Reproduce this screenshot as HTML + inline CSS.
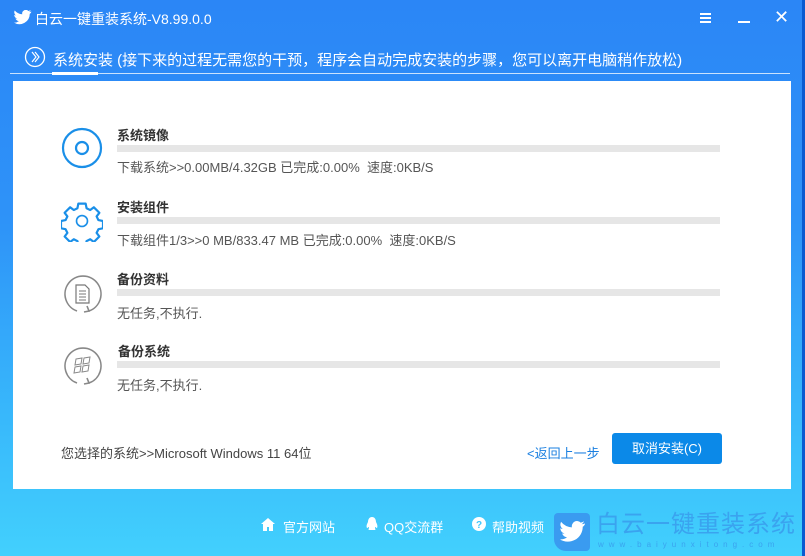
<!DOCTYPE html>
<html><head><meta charset="utf-8"><style>
*{margin:0;padding:0;box-sizing:border-box}
html,body{width:805px;height:556px;overflow:hidden}
body{font-family:"Liberation Sans","Noto Sans CJK SC",sans-serif;position:relative;
background:linear-gradient(180deg,#2b86f6 0%,#2e93f8 40%,#38b8fb 75%,#42d0fd 100%);}
.abs{position:absolute;white-space:nowrap}
.title{left:35px;top:9px;color:#fff;font-size:14px}
.hdr{left:53px;top:49px;color:#fff;font-size:15px}
.line{left:10px;top:73px;width:780px;height:1px;background:rgba(255,255,255,.75)}
.tab{left:52px;top:72px;width:46px;height:3px;background:#fff}
.panel{left:13px;top:81px;width:778px;height:408px;background:#fff}
.name{font-size:13px;font-weight:bold;color:#333}
.bar{width:603px;height:7px;background:#e6e6e6}
.st{font-size:13px;color:#555}
.btn{left:612px;top:433px;width:110px;height:31px;background:#0b89e8;border-radius:3px;color:#fff;font-size:13px;text-align:center;line-height:31px}
.ft{color:#fff;font-size:13px;top:517px}
.rb{right:0;top:0;width:3px;height:556px;background:#0a5ad0}
</style></head><body>
<div class="abs rb"></div>
<svg class="abs" style="left:14px;top:10px" width="18" height="15" viewBox="0 0 24 20"><path fill="#fff" d="M23 2c-1 .5-2 .7-3 .8 1-.6 1.8-1.6 2.2-2.7-1 .6-2 1-3.1 1.2A4.8 4.8 0 0 0 11 5.7 13.7 13.7 0 0 1 1 .7a4.8 4.8 0 0 0 1.5 6.4c-.8 0-1.5-.2-2.2-.6 0 2.3 1.7 4.3 3.9 4.8-.7.2-1.5.2-2.2.1.6 1.9 2.4 3.3 4.5 3.4A9.7 9.7 0 0 1 0 16.8 13.7 13.7 0 0 0 21 5.2c1-.7 1.7-1.6 2-2.5z"/></svg>
<div class="abs title">白云一键重装系统-V8.99.0.0</div>
<div class="abs" style="left:700px;top:13px;width:11px;height:2px;background:#fff;box-shadow:0 4px #fff,0 8px #fff"></div>
<div class="abs" style="left:738px;top:21px;width:12px;height:2px;background:#fff"></div>
<div class="abs" style="left:774px;top:8px;color:#fff;font-size:18px;line-height:18px">✕</div>
<svg class="abs" style="left:24px;top:46px" width="22" height="22"><circle cx="11" cy="11" r="9.5" fill="none" stroke="#fff" stroke-width="1.3"/><path d="M8 6l4 5-4 5M11 6l4 5-4 5" fill="none" stroke="#fff" stroke-width="1.2"/></svg>
<div class="abs hdr">系统安装 (接下来的过程无需您的干预，程序会自动完成安装的步骤，您可以离开电脑稍作放松)</div>
<div class="abs line"></div><div class="abs tab"></div>
<div class="abs panel"></div>

<svg class="abs" style="left:61px;top:127px" width="42" height="42"><circle cx="21" cy="21" r="19" fill="none" stroke="#1a8fe8" stroke-width="2.2"/><circle cx="21" cy="21" r="6" fill="none" stroke="#1a8fe8" stroke-width="2.2"/></svg>
<div class="abs name" style="left:117px;top:125px">系统镜像</div>
<div class="abs bar" style="left:117px;top:145px"></div>
<div class="abs st" style="left:117px;top:157px">下载系统>>0.00MB/4.32GB 已完成:0.00%&nbsp; 速度:0KB/S</div>

<svg class="abs" style="left:61px;top:200px" width="42" height="42" viewBox="-2 -2 46 46"><path fill="none" stroke="#1a8fe8" stroke-width="2.4" stroke-linejoin="round" d="M17 2h8l1 5 4 2 4-3 6 6-3 4 2 4 5 1v8l-5 1-2 4 3 4-6 6-4-3-4 2-1 5h-8l-1-5-4-2-4 3-6-6 3-4-2-4-5-1v-8l5-1 2-4-3-4 6-6 4 3 4-2z"/><circle cx="21" cy="21" r="6" fill="none" stroke="#1a8fe8" stroke-width="1.8"/></svg>
<div class="abs name" style="left:117px;top:197px">安装组件</div>
<div class="abs bar" style="left:117px;top:217px"></div>
<div class="abs st" style="left:117px;top:230px">下载组件1/3>>0 MB/833.47 MB 已完成:0.00%&nbsp; 速度:0KB/S</div>

<svg class="abs" style="left:61px;top:273px" width="42" height="42"><path d="M16 38A18 18 0 1 1 28 38" fill="none" stroke="#888" stroke-width="1.6"/><path d="M26 33l2 5-5 1" fill="none" stroke="#888" stroke-width="1.6"/><path d="M15 12h9l4 4v14H15z" fill="none" stroke="#777" stroke-width="1.2"/><path d="M18 18h7M18 21h7M18 24h7M18 27h7" stroke="#777"/></svg>
<div class="abs name" style="left:117px;top:269px">备份资料</div>
<div class="abs bar" style="left:117px;top:289px"></div>
<div class="abs st" style="left:117px;top:303px">无任务,不执行.</div>

<svg class="abs" style="left:61px;top:345px" width="42" height="42"><path d="M16 38A18 18 0 1 1 28 38" fill="none" stroke="#888" stroke-width="1.6"/><path d="M26 33l2 5-5 1" fill="none" stroke="#888" stroke-width="1.6"/><path d="M15 14l6-1 -1 6-6 1zM23 13l6-1-1 6-6 1zM14 22l6-1-1 6-6 1zM22 21l6-1-1 6-6 1z" fill="none" stroke="#888" stroke-width="1"/></svg>
<div class="abs name" style="left:118px;top:341px">备份系统</div>
<div class="abs bar" style="left:117px;top:361px"></div>
<div class="abs st" style="left:117px;top:375px">无任务,不执行.</div>

<div class="abs st" style="left:61px;top:443px;color:#444">您选择的系统>>Microsoft Windows 11 64位</div>
<div class="abs" style="left:527px;top:443px;color:#1a7fe0;font-size:13px">&lt;返回上一步</div>
<div class="abs btn">取消安装(C)</div>

<svg class="abs" style="left:261px;top:518px" width="14" height="13"><path d="M7 0L0 6h2v7h4V9h2v4h4V6h2z" fill="#fff"/></svg>
<div class="abs ft" style="left:283px">官方网站</div>
<svg class="abs" style="left:365px;top:517px" width="14" height="15"><path d="M7 0C4 0 3 3 3 5 2 7 1 9 2 11c1 0 1-1 2-1 0 2-1 3 0 3h6c1 0 0-1 0-3 1 0 1 1 2 1 1-2 0-4-1-6 0-2-1-5-4-5z" fill="#fff"/></svg>
<div class="abs ft" style="left:384px">QQ交流群</div>
<svg class="abs" style="left:472px;top:517px" width="14" height="14"><circle cx="7" cy="7" r="7" fill="#fff"/><text x="7" y="11" text-anchor="middle" font-size="10" font-weight="bold" fill="#3fc6fb" font-family="Liberation Sans">?</text></svg>
<div class="abs ft" style="left:492px">帮助视频</div>
<div class="abs" style="left:554px;top:513px;width:36px;height:38px;background:#3a9bf0;border-radius:4px 4px 4px 12px"></div>
<svg class="abs" style="left:560px;top:521px" width="26" height="22" viewBox="0 0 24 20"><path fill="#fff" d="M23 2c-1 .5-2 .7-3 .8 1-.6 1.8-1.6 2.2-2.7-1 .6-2 1-3.1 1.2A4.8 4.8 0 0 0 11 5.7 13.7 13.7 0 0 1 1 .7a4.8 4.8 0 0 0 1.5 6.4c-.8 0-1.5-.2-2.2-.6 0 2.3 1.7 4.3 3.9 4.8-.7.2-1.5.2-2.2.1.6 1.9 2.4 3.3 4.5 3.4A9.7 9.7 0 0 1 0 16.8 13.7 13.7 0 0 0 21 5.2c1-.7 1.7-1.6 2-2.5z"/></svg>
<div class="abs" style="left:596px;top:512px;color:#3aa3ef;font-size:24px;letter-spacing:1px;line-height:26px">白云一键重装系统</div>
<div class="abs" style="left:598px;top:540px;color:#3aa3ef;font-size:8px;letter-spacing:5px;line-height:10px">www.baiyunxitong.com</div>
</body></html>
